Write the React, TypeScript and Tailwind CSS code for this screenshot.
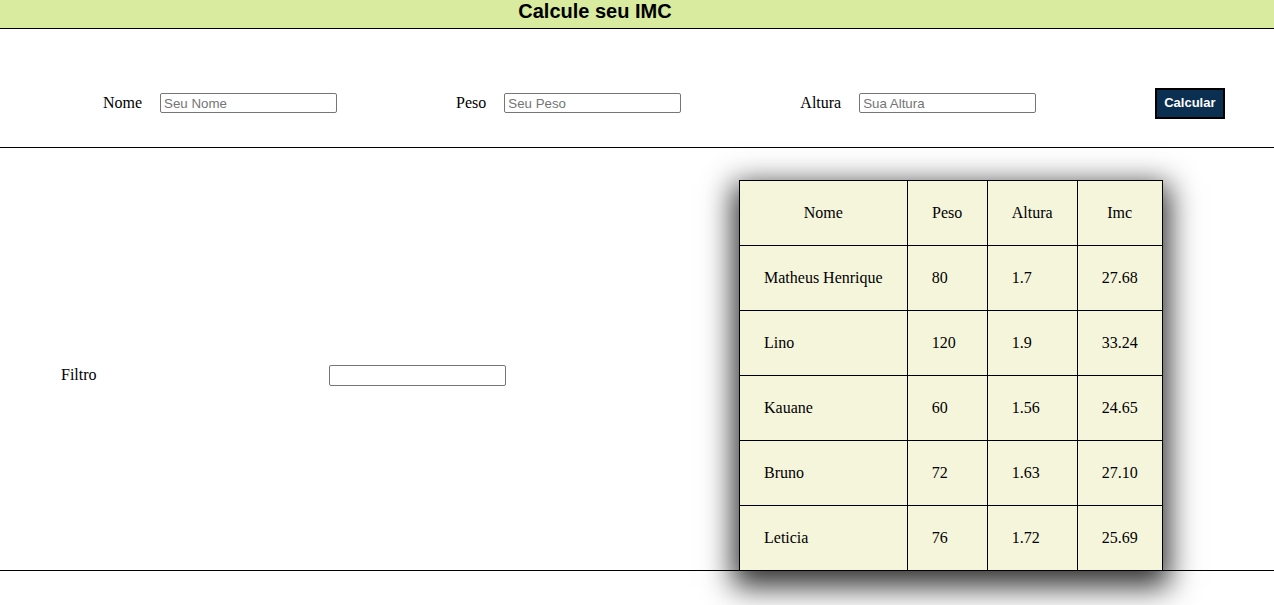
const pessoas = [
  { nome: "Matheus Henrique", peso: "80", altura: "1.7", imc: "27.68" },
  { nome: "Lino", peso: "120", altura: "1.9", imc: "33.24" },
  { nome: "Kauane", peso: "60", altura: "1.56", imc: "24.65" },
  { nome: "Bruno", peso: "72", altura: "1.63", imc: "27.10" },
  { nome: "Leticia", peso: "76", altura: "1.72", imc: "25.69" },
];

function Campo({ label, placeholder }: { label: string; placeholder: string }) {
  return (
    <div className="flex items-center gap-[18px]">
      <label className="text-base">{label}</label>
      <input
        placeholder={placeholder}
        className="w-[177px] h-[20px] border border-[#767676] rounded-[2px] px-[3px] text-[13.3px] font-['Liberation_Sans',sans-serif] placeholder:text-[#757575] outline-none"
      />
    </div>
  );
}

export default function App() {
  return (
    <div className="min-h-[605px] bg-white text-black font-['Liberation_Serif',serif]">
      {/* Header */}
      <header className="h-[29px] bg-[#d8eb9e] border-b border-black flex justify-center pr-[84px]">
        <h1 className="text-[20px] leading-[22px] font-bold font-['Comic_Sans_MS','Liberation_Sans',sans-serif]">
          Calcule seu IMC
        </h1>
      </header>

      {/* Form */}
      <section className="h-[119px] border-b border-black flex items-center pl-[103px] gap-[119px] pt-[30px]">
        <Campo label="Nome" placeholder="Seu Nome" />
        <Campo label="Peso" placeholder="Seu Peso" />
        <Campo label="Altura" placeholder="Sua Altura" />
        <button className="h-[31px] px-[7px] bg-[#0b2f50] border-2 border-black text-white text-[13px] font-bold font-['Liberation_Sans',sans-serif]">
          Calcular
        </button>
      </section>

      {/* Lista */}
      <section className="border-b border-black flex items-center pt-[32px]">
        <div className="flex items-center pl-[61px] w-[739px]">
          <label className="w-[268px] text-base">Filtro</label>
          <input className="w-[177px] h-[21px] border border-[#767676] rounded-[2px] outline-none" />
        </div>
        <table className="border-collapse bg-[#f5f5dc] shadow-[0_10px_28px_6px_rgba(0,0,0,0.8)] mb-[-1px] whitespace-nowrap">
          <thead>
            <tr className="h-[65px]">
              <th className="border border-black font-normal w-[166px]">Nome</th>
              <th className="border border-black font-normal w-[80px]">Peso</th>
              <th className="border border-black font-normal w-[90px]">Altura</th>
              <th className="border border-black font-normal w-[85px]">Imc</th>
            </tr>
          </thead>
          <tbody>
            {pessoas.map((p) => (
              <tr key={p.nome} className="h-[65px]">
                <td className="border border-black px-6">{p.nome}</td>
                <td className="border border-black px-6">{p.peso}</td>
                <td className="border border-black px-6">{p.altura}</td>
                <td className="border border-black px-6">{p.imc}</td>
              </tr>
            ))}
          </tbody>
        </table>
      </section>
    </div>
  );
}
